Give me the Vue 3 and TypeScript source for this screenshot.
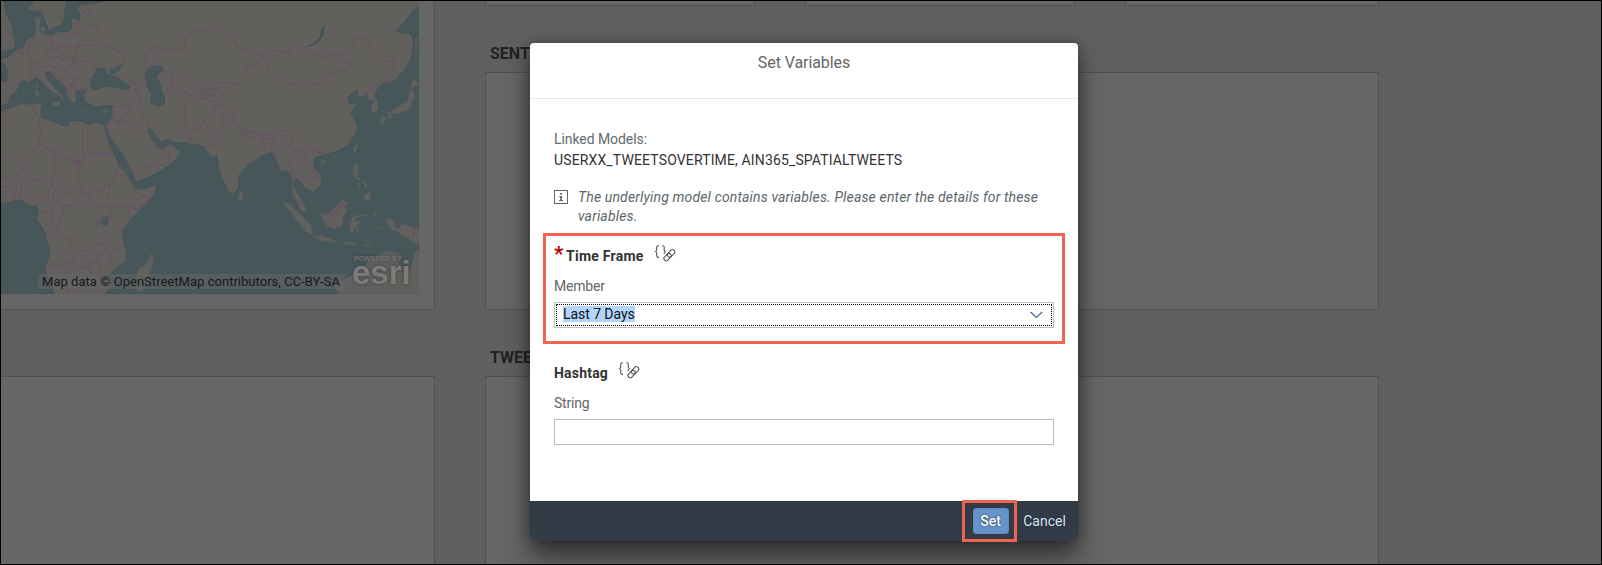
<script setup lang="ts">
const seas: string[] = [
  // North Sea and Baltic
  'M12 3L18 40L34 70L42 110L48 135L40 150L3 156V176L28 168L48 150L68 140L78 120L104 107L108 90L102 68L112 50L124 48L122 74L118 92L130 100L152 104L172 96L206 94L216 84L214 52L238 60L240 44L230 28L238 14L268 12L290 8L310 3H202L196 26L190 60L184 78L168 80L152 90L142 86L134 60L126 40L110 32L84 34L82 24L98 8V3Z',
  'M3 188L16 194L22 214L20 242H3Z',
  // Mediterranean
  'M3 318L25 310L30 288L52 272L58 248L70 241L88 248L108 234L124 244L138 260L156 276L180 290L186 302L192 308L190 292L180 278L162 262L148 244L137 228L140 216L152 216L164 234L184 248L196 262L200 284L210 304L222 312L230 300L226 276L240 270L262 274L248 284L252 300L266 312L288 322L318 316L338 318L334 348L325 370L310 374L290 368L264 374L240 362L208 362L206 376L196 380L160 364L124 352L122 334L128 316L118 308L92 312L60 312L34 322L3 332Z',
  // Black Sea
  'M272 264L276 236L290 208L302 204L318 208L316 222L334 226L360 238L388 258L386 270L352 264L322 258L300 264L284 270Z',
  'M328 210L346 202L366 196L356 212L340 222L332 218Z',
  // Caspian Sea
  'M434 226L440 210L462 198L484 200L488 212L472 222L470 236L484 258L482 274L494 290L492 314L476 318L452 308L456 286L444 262L438 242Z',
  // Lakes
  'M920 139L940 132L960 112L966 82L972 80L970 106L952 128L930 138Z',
  'M304 658L310 652L326 650L322 662L322 672L310 676L304 668Z',
  // Gulf of Guinea and the South Atlantic
  'M3 610L28 608L52 600L68 600L80 612L94 618L112 617L116 632L110 660L124 678L136 700L142 730L150 748L144 780L134 802L140 826L154 850L162 882H3Z',
  // Indian Ocean and the western Pacific
  'M310 374L318 400L330 440L345 464L358 500L376 514L394 544L402 558L418 568L440 564L470 552L466 578L440 612L404 646L384 668L368 692L372 734L380 750L378 780L346 806L330 826L334 846L318 882H1257V20L1240 30L1214 66L1188 92L1210 100L1226 98L1238 112L1240 136L1234 174L1216 206L1188 240L1170 250L1152 248L1136 262L1124 286L1134 302L1136 328L1126 338L1112 336L1112 316L1122 304L1104 300L1100 284L1082 294L1074 290L1072 272L1056 278L1042 294L1050 312L1078 310L1062 322L1052 338L1072 374L1070 396L1058 414L1044 436L1012 454L974 464L944 474L940 484L944 504L962 524L966 546L958 562L936 580L930 570L914 566L894 536L884 538L884 562L894 582L908 600L918 622L922 642L902 634L888 602L876 584L878 558L870 524L858 510L842 518L836 500L824 474L816 458L800 462L786 468L772 478L748 490L730 510L716 528L716 560L698 584L686 576L664 530L656 498L650 464L640 474L620 454L610 440L588 434L548 430L518 426L502 418L486 426L468 410L458 392L446 384L444 394L456 418L470 440L490 444L512 430L524 440L544 454L530 474L516 490L488 510L446 532L406 546L398 520L380 486L366 458L352 444L340 424L326 404L318 378Z',
]

const islands: string[] = [
  'M106 250L114 248V262L108 264ZM104 272L116 268L118 286L108 292ZM150 312L180 302L178 318L164 318Z',
  'M236 330L258 332L254 336L238 334ZM308 334L326 328L320 340Z',
  'M104 56L118 52L122 70L114 84L106 76ZM120 84L132 78L136 92L124 96ZM182 52L192 44L190 56L184 62Z',
  // British Isles
  'M3 52L12 56L22 84L34 108L46 124L38 146L3 153Z',
  // Madagascar and Sri Lanka
  'M454 758L462 782L458 796L440 846L426 878L412 874L408 842L414 806L440 790ZM716 570L724 574L732 592L724 604L716 600Z',
  // Hainan, Taiwan and Japan
  'M964 482L978 478L974 490L966 494ZM1066 434L1074 430L1070 452L1062 458L1060 444Z',
  'M1230 270L1240 268L1244 290L1234 314L1226 334L1210 332L1192 342L1176 340L1166 346L1160 338L1184 328L1200 314L1222 304ZM1144 350L1156 348L1158 360L1148 374L1140 364ZM1164 346L1180 344L1174 354L1164 356ZM1232 250L1244 236L1257 250L1236 266ZM1246 116L1252 108L1250 170L1246 200Z',
  // Philippines
  'M1064 494L1074 492L1076 508L1070 530L1084 538L1078 542L1062 532L1058 516ZM1088 586L1100 582L1110 572L1112 600L1098 604L1092 592ZM1072 548L1082 550L1078 564ZM1088 546L1096 544L1102 560L1094 562ZM1034 580L1056 556L1050 568L1036 582Z',
  // Indonesia
  'M846 606L866 610L892 634L912 654L934 676L936 700L926 702L900 676L876 642ZM936 708L958 706L984 714L1008 722L1006 728L970 722L940 714Z',
  'M964 642L986 640L1010 616L1026 598L1048 610L1036 620L1042 634L1030 652L1026 680L1000 686L980 678L966 660Z',
  'M1056 650L1068 646L1098 642L1102 648L1076 652L1064 658L1068 666L1084 660L1080 670L1072 674L1078 696L1070 694L1064 678L1060 698L1052 698L1048 678ZM1022 726L1040 726L1068 730L1070 736L1030 732ZM1090 736L1116 726L1108 734L1092 740Z',
  'M1122 634L1130 630L1128 652L1122 648ZM1128 680L1146 682L1144 686L1128 684ZM1154 658L1172 656L1184 668L1180 676L1196 686L1206 672L1236 680L1257 686V732L1244 730L1226 716L1208 708L1190 694L1170 686Z',
  // Australia
  'M1016 882L1000 858L1012 846L1044 832L1062 820L1090 806L1104 784L1130 770L1146 758L1166 752L1200 762L1194 786L1216 814L1230 808L1246 750L1257 752V882Z',
]

const borders: string[] = [
  // Europe
  'M48 143L62 157L84 164L88 128L106 108M62 145L84 146M3 244L30 248L58 254M88 196L94 212L92 224L98 234M84 164L92 192L114 190L124 200L144 198M152 104L160 142L138 158L146 176L166 172L190 164L176 150L160 146M146 176L142 194L178 210M176 174L190 182L220 174L226 184L206 206L178 208L176 196M190 168L208 170L234 172M160 142L186 136L212 142L232 142L236 116L230 96L218 92M212 96L230 104L252 92L262 76L246 74L220 68M236 24L268 50L272 4M262 76L286 76L304 104L308 132L288 138L264 134L236 140L228 168M258 184L272 184L286 204L288 222M220 174L240 184L260 182M216 232L244 240L272 238M178 210L164 216L166 232L192 236M196 210L206 232L218 240L214 262L202 266L206 290M206 250L230 268L262 266M226 208L226 238M308 132L346 148L372 164L374 186L356 198',
  'M386 242L412 250L432 262L444 264M400 262L418 270L432 294L414 290L408 268M414 290L420 308L408 312L342 320M388 316L390 332L366 346L364 362L340 362M338 320L336 364M330 362L318 376L330 402M334 390L354 384L350 368L366 358L392 368L434 394L444 390M400 312L416 318L428 350L440 364L442 384',
  // Central Asia
  'M470 198L444 190L432 180L440 156L464 138L504 148L550 150L556 104L600 92L650 84L688 100L718 148L750 148L782 168L820 150L866 160L878 134L906 146L924 160L970 170L1024 160L1050 160L1062 142L1060 118L1084 112L1108 124L1122 160L1152 186L1184 182L1172 220L1152 226L1156 250',
  'M782 168L802 184L808 214L840 230L854 248L924 258L980 248L988 222L1012 218L1054 202L1050 190L1020 184L1026 164M782 168L766 196L742 198L736 218L718 230L718 250L674 270L662 290L672 304L664 316L698 344L706 376L736 394L786 404',
  'M512 264V220L534 222L560 240L584 240L606 266L626 270L644 262L660 272M494 280L520 250L556 278L586 290L600 298L620 280L636 290L660 294M512 220L534 236M606 266L610 298L644 284L650 274L624 266M556 306L586 302L612 296L642 304L660 316M556 306L554 346L558 390L598 388L612 362L638 350L644 314L660 316M564 396L574 420L564 428M612 440L634 438L656 430L632 416L640 400L670 374L664 336L680 346M645 248L712 248',
  // South and South-East Asia
  'M720 384L740 390L784 406L786 418L744 410L718 392ZM790 404H818V414L794 416ZM788 420L796 458M790 426L812 430L818 458M818 416L838 392L858 392L874 404L872 430L854 446L846 466M816 430L832 416M822 454L830 478M874 432L888 452L904 452L920 458L936 450L952 454L974 464M888 452L876 476L868 496L878 514L876 556L880 570M892 468L908 492L936 506L942 528L906 532L908 544M904 452L920 476L940 500L952 528L936 538L926 554M884 598L904 606M974 646L1008 640L1018 618L1040 616M1238 680V730M1088 286L1106 268L1140 254M1112 302L1128 298',
  'M480 510L470 492L430 502L400 510M484 496L512 482L506 456M470 492L476 504M476 444L500 454L508 480',
  // Africa
  'M104 314L102 334L118 354V384L122 400L118 430L146 450L162 462L246 500M20 330L16 354L18 366L3 378M118 430L70 492L3 450M160 462L164 450L246 494M248 374V460H338M248 460V480L236 482V554M160 462L162 532L160 546L64 534L36 562L3 560M70 492L68 516L40 528L26 530L3 530M34 562L36 604M50 560L44 604M66 538L56 600M156 542L158 560L132 592L112 618M156 542L164 572L158 600L192 616L228 618L280 618L332 622L328 654L286 666M164 572L202 582L228 560L244 580L286 574L310 570L316 550M236 554L246 566L262 590L284 614M316 550L328 560L346 528L354 500L368 504M346 528L374 524L396 548L404 558M328 560L326 616L348 624L388 620L412 628L448 598L402 572L396 564M388 620L384 660M328 654L366 694M300 650L294 676L286 702L316 718L326 736L340 748L378 744M286 666L292 684M192 616L188 644L176 666L168 690L140 704M112 634L150 636L156 618M156 620L158 660L134 680M166 700L186 708L194 718L208 714L214 748L222 750L220 772L208 788L134 802M222 750L266 752L282 736L306 728L318 740L306 762L282 760L278 752M222 766L224 792L256 800L282 786L308 764M316 738L334 760L332 790L324 786M208 804L242 806L256 800L276 784L300 790L302 830L288 846L258 844L236 870L204 882L202 832L210 832V806M256 802L280 824L302 828M242 850L268 870L302 878L302 846',
]

const leftBrace = 'M5 .7H4Q2.7.7 2.7 2.3V5Q2.7 6.5.7 6.5Q2.7 6.5 2.7 8v2.8Q2.7 12.4 4 12.4H5'
const rightBrace = 'M8.2.7h.7q1.3 0 1.3 1.6V5q0 1.5 2 1.5q-2 0-2 1.4v1.2'

interface Field { label: string; kind: string; value: string }
const timeFrame: Field = { label: 'Time Frame', kind: 'Member', value: 'Last 7 Days' }
const hashtag: Field = { label: 'Hashtag', kind: 'String', value: '' }
</script>

<template>
  <div class="screen">
    <div class="story">
      <section class="column left">
        <div class="panel map-panel">
          <div class="map">
            <svg viewBox="3 3 1254 879" preserveAspectRatio="none">
              <path v-for="d in seas" :key="d" :d="d" class="sea" />
              <path v-for="d in islands" :key="d" :d="d" class="land" />
              <path v-for="d in borders" :key="d" :d="d" class="border" />
            </svg>
            <div class="attribution">Map data © OpenStreetMap contributors, CC-BY-SA</div>
            <div class="esri"><small>POWERED BY</small><b>esri</b></div>
          </div>
        </div>
        <div class="panel lower"></div>
      </section>
      <section class="column right">
        <div class="tiles"><div class="panel"></div><div class="panel"></div><div class="panel"></div></div>
        <h2>SENTIMENT</h2>
        <div class="panel chart"></div>
        <h2>TWEETS</h2>
        <div class="panel lower"></div>
      </section>
    </div>

    <div class="dialog">
      <header>Set Variables</header>
      <main>
        <div class="caption">Linked Models:</div>
        <div class="models">USERXX_TWEETSOVERTIME, AIN365_SPATIALTWEETS</div>
        <div class="hint">
          <svg width="14" height="14" viewBox="0 0 14 14">
            <rect x=".5" y=".5" width="13" height="13" fill="none" stroke="#59666b" />
            <path d="M6 3h2v1.6H6zM5.2 6H8v4h1v1H5v-1h1.2V7h-1z" fill="#59666b" />
          </svg>
          <p>The underlying model contains variables. Please enter the details for these <span>variables.</span></p>
        </div>
        <div class="marked field">
          <div class="label">
            <i>*</i><span class="time">{{ timeFrame.label }}</span>
            <svg class="link" width="22" height="18" viewBox="0 0 22 18">
              <path :d="leftBrace" /><path :d="rightBrace" />
              <rect x="12.9" y="6" width="8.4" height="4.6" rx="2.3" transform="rotate(-45 17.1 8.3)" />
              <rect x="9.4" y="9.9" width="8.4" height="4.6" rx="2.3" transform="rotate(-45 13.6 12.2)" />
            </svg>
          </div>
          <div class="kind">{{ timeFrame.kind }}</div>
          <div class="select">
            <div class="focus">
              <mark>{{ timeFrame.value }}</mark>
              <svg width="13" height="8" viewBox="0 0 13 8"><path d="M.7 1l5.1 5.1q.5.4 1 0L12.2 1" /></svg>
            </div>
          </div>
        </div>
        <div class="field plain">
          <div class="label">
            <span>{{ hashtag.label }}</span>
            <svg class="link" width="22" height="18" viewBox="0 0 22 18">
              <path :d="leftBrace" /><path :d="rightBrace" />
              <rect x="12.9" y="6" width="8.4" height="4.6" rx="2.3" transform="rotate(-45 17.1 8.3)" />
              <rect x="9.4" y="9.9" width="8.4" height="4.6" rx="2.3" transform="rotate(-45 13.6 12.2)" />
            </svg>
          </div>
          <div class="kind">{{ hashtag.kind }}</div>
          <div class="input">{{ hashtag.value }}</div>
        </div>
      </main>
      <footer>
        <div class="marked set"><button class="primary">Set</button></div>
        <button class="cancel">Cancel</button>
      </footer>
    </div>
  </div>
</template>

<style>
body { margin: 0; overflow: hidden; }
</style>
<style scoped>
* { box-sizing: border-box; }
.screen {
  position: relative; width: 1602px; height: 565px; overflow: hidden;
  border: 1px solid #000; background: #606060;
  font-family: Roboto, "Liberation Sans", sans-serif; font-size: 14px;
}
.story { display: flex; gap: 50px; height: 563px; }
.column { display: flex; flex-direction: column; }
.left { width: 434px; }
.right { width: 894px; }
.panel { background: #666; border: 1px solid #505050; }
.left .panel { border-left: 0; }
.map-panel { height: 309px; border-top: 0; margin-bottom: 66px; }
.lower { flex: 1; border-bottom: 0; }
.map { position: relative; width: 418px; height: 293px; background: #61605d; overflow: hidden; }
.map > svg { display: block; width: 418px; height: 293px; }
.sea { fill: #465659; stroke: #3f5056; stroke-width: 2; stroke-linejoin: round; }
.land { fill: #61605d; stroke: #4c5a5c; stroke-width: 2; stroke-linejoin: round; }
.border { fill: none; stroke: #665263; stroke-width: 3.6; stroke-linejoin: round; }
.attribution {
  position: absolute; left: 37px; top: 273px; width: 307px; height: 15px;
  padding-left: 4px; line-height: 15px; font-size: 13px; letter-spacing: .03px; white-space: nowrap;
  color: #17191a; background: rgba(102, 102, 102, .55);
}
.esri {
  position: absolute; left: 351px; top: 253px; display: flex; flex-direction: column;
  color: #7c7c7c; text-shadow: 0 0 3px #3c3c3c;
}
.esri small { font: 700 7px/9px "Liberation Sans", sans-serif; padding-left: 2px; color: #747474; }
.esri b { font: 700 33px/30px "Liberation Sans", sans-serif; margin-top: -5px; }
.tiles { display: grid; grid-template-columns: 270px 270px 254px; gap: 50px; height: 5px; }
.tiles .panel { border-top: 0; }
h2 { margin: 38px 0 8px; padding-left: 5px; font-size: 16px; line-height: 20px; color: #202123; }
.chart { height: 238px; }
.dialog {
  position: absolute; left: 529px; top: 42px; width: 548px; height: 498px;
  display: flex; flex-direction: column;
  background: #fff; border-radius: 4px 4px 6px 6px; color: #333;
  box-shadow: 0 16px 26px rgba(0, 0, 0, .5), 0 0 12px rgba(0, 0, 0, .3);
}
header { height: 56px; padding-top: 9px; line-height: 22px; text-align: center; font-size: 16px; letter-spacing: -.08px; color: #666; border-bottom: 1px solid #e8e8e8; }
main { flex: 1; padding: 30px 24px 0; }
.caption { line-height: 20px; color: #5f6b70; letter-spacing: -.07px; }
.models { line-height: 22px; letter-spacing: .14px; white-space: nowrap; }
.hint { display: flex; gap: 10px; margin-top: 17px; color: #59666b; font-style: italic; }
.hint svg { margin-top: 2px; flex: none; }
.hint p { margin: 0; line-height: 19px; letter-spacing: .15px; white-space: nowrap; }
.hint span { display: block; }
.marked { border: 3px solid #ee6352; }
.field.marked { margin: 7px -11px 0; height: 111px; padding: 0 8px; }
.label { display: flex; height: 40px; padding-top: 10px; font-weight: 700; line-height: 20px; }
.label i { font: 700 21px/26px Roboto, sans-serif; width: 12px; color: #b00; margin-top: -5px; }
.time { letter-spacing: .25px; }
.link { margin: -1px 0 0 10px; fill: none; stroke: #555; stroke-width: 1.1; }
.kind { line-height: 20px; color: #666; letter-spacing: -.2px; margin-bottom: 6px; }
.select, .input { border: 1px solid #bfbfbf; height: 26px; }
.select { padding: 1px; }
.focus { display: flex; align-items: center; height: 22px; border: 1px dotted #000; padding: 0 8px 0 6px; }
mark { background: #b3d5fd; color: #111; line-height: 16px; letter-spacing: -.06px; margin-bottom: 2px; }
.focus svg { margin-left: auto; fill: none; stroke: #3f6797; stroke-width: 1.3; }
.plain { margin-top: 9px; }
.plain .label span { letter-spacing: .2px; }
footer {
  height: 40px; display: flex; justify-content: flex-end; gap: 6px; padding-right: 12px;
  background: #323b46; border-radius: 0 0 5px 5px;
}
.set { width: 55px; height: 42px; margin-top: -1px; padding-left: 2px; display: flex; align-items: center; justify-content: center; }
button { border: 0; padding: 0; font: inherit; text-shadow: 0 0 2px #17212c; }
.primary { width: 36px; height: 26px; background: #6494cb; border: 1px solid #5d8bc0; border-radius: 3px; color: #fff; font-weight: 500; }
.cancel { background: none; color: #d4e7fa; width: 43px; }
</style>
